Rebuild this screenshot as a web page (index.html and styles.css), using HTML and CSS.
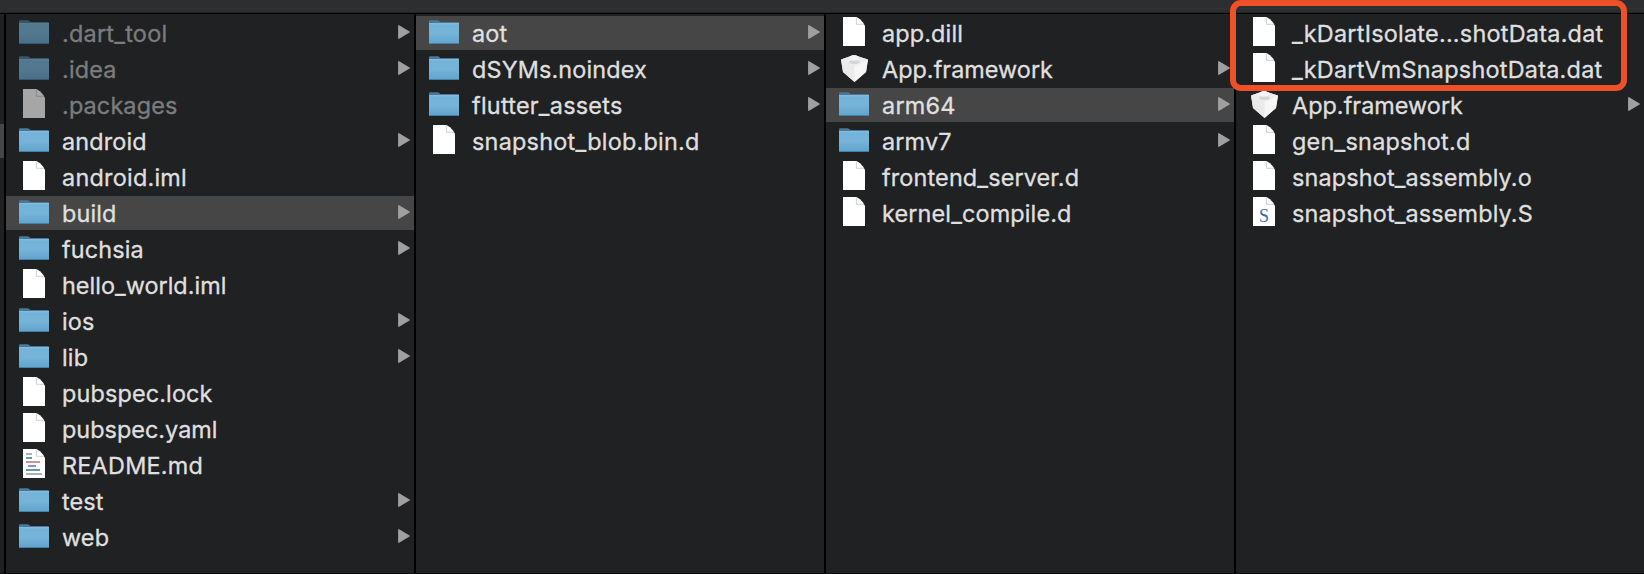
FILE: index.html
```html
<!DOCTYPE html>
<html lang="en">
<head>
<meta charset="utf-8">
<title>Finder</title>
<link rel="stylesheet" href="styles.css">
</head>
<body>
<svg class="defs" aria-hidden="true">
  <defs>
    <linearGradient id="blue" x1="0" y1="0" x2="0" y2="1"><stop offset="0" stop-color="#74b3d8"/><stop offset=".5" stop-color="#76b3d8"/><stop offset="1" stop-color="#60a3cc"/></linearGradient>
    <symbol id="folder" viewBox="0 0 30 24"><path d="M0 1.200Q0 .2 1 .2H8.500Q9.500 .2 10.300 1L11.500 2H29Q30 2 30 3V10H0Z" fill="#4a7895"/><path d="M0 3.300H30V23Q30 24 29 24H1Q0 24 0 23Z" fill="url(#blue)"/><path d="M0 3.700H30" stroke="#8ac6e8" stroke-width=".9"/><path d="M.5 23.500H29.500" stroke="#437fa6"/></symbol>
    <symbol id="file" viewBox="0 0 22 29"><path d="M0 0H13.500L17 2.300L20 5.500L22 9V29H0Z" fill="#fff"/><path d="M13.400 .3V7.300H20.800" fill="none" stroke="#c6c6c6" stroke-width=".8"/></symbol>
    <symbol id="brick" viewBox="0 0 28 28"><path d="M1 5.500L9.500 2.500Q14 -.5 18.500 2.500L28 5.500L26 18L14.500 28L3 18Z" fill="#e8e8e8"/><path d="M1 5.500L14.500 12L28 5.500L18.500 2.500Q14 -.5 9.500 2.500Z" fill="#ededed"/><path d="M1 5.500L14.500 12V28L3 18Z" fill="#ebebeb"/><path d="M14.500 12L28 5.500L26 18L14.500 28Z" fill="#f6f6f6"/><ellipse cx="14.300" cy="8" rx="5.500" ry="2" fill="#d6d6d6"/><ellipse cx="14.300" cy="4" rx="5" ry="2.600" fill="#f4f4f4"/></symbol>
    <symbol id="arrow" viewBox="0 0 12 14"><path d="M.8 .8L11.200 7L.8 13.200Z" fill="#a0a0a0" stroke="#a0a0a0" stroke-width="1.400" stroke-linejoin="round"/></symbol>
  </defs>
</svg>
<div class="browser">
  <div class="toolbar"></div>
  <main class="columns">
    <div class="edge"><div class="edge-selection"></div></div>
    <section class="column">
      <div class="row dim"><svg class="icon folder"><use href="#folder"/></svg><span class="name wide">.dart_tool</span><svg class="arrow"><use href="#arrow"/></svg></div>
      <div class="row dim"><svg class="icon folder"><use href="#folder"/></svg><span class="name">.idea</span><svg class="arrow"><use href="#arrow"/></svg></div>
      <div class="row dim"><svg class="icon file"><use href="#file"/></svg><span class="name">.packages</span></div>
      <div class="row"><svg class="icon folder"><use href="#folder"/></svg><span class="name">android</span><svg class="arrow"><use href="#arrow"/></svg></div>
      <div class="row"><svg class="icon file"><use href="#file"/></svg><span class="name wide">android.iml</span></div>
      <div class="row selected"><svg class="icon folder"><use href="#folder"/></svg><span class="name">build</span><svg class="arrow"><use href="#arrow"/></svg></div>
      <div class="row"><svg class="icon folder"><use href="#folder"/></svg><span class="name">fuchsia</span><svg class="arrow"><use href="#arrow"/></svg></div>
      <div class="row"><svg class="icon file"><use href="#file"/></svg><span class="name tight">hello_world.iml</span></div>
      <div class="row"><svg class="icon folder"><use href="#folder"/></svg><span class="name">ios</span><svg class="arrow"><use href="#arrow"/></svg></div>
      <div class="row"><svg class="icon folder"><use href="#folder"/></svg><span class="name">lib</span><svg class="arrow"><use href="#arrow"/></svg></div>
      <div class="row"><svg class="icon file"><use href="#file"/></svg><span class="name">pubspec.lock</span></div>
      <div class="row"><svg class="icon file"><use href="#file"/></svg><span class="name tight">pubspec.yaml</span></div>
      <div class="row"><svg class="icon file" viewBox="0 0 22 29"><use href="#file" width="22" height="29"/><g stroke-width="1.800"><path d="M3 5H9M3 25H19" stroke="#b0b0b0"/><path d="M3 9H9M3 21H17" stroke="#5f9d9f"/><path d="M3 13H17" stroke="#c18a91"/><path d="M5 17H13" stroke="#917bd0"/></g></svg><span class="name wide">README.md</span></div>
      <div class="row"><svg class="icon folder"><use href="#folder"/></svg><span class="name">test</span><svg class="arrow"><use href="#arrow"/></svg></div>
      <div class="row"><svg class="icon folder"><use href="#folder"/></svg><span class="name">web</span><svg class="arrow"><use href="#arrow"/></svg></div>
    </section>
    <section class="column">
      <div class="row selected"><svg class="icon folder"><use href="#folder"/></svg><span class="name">aot</span><svg class="arrow"><use href="#arrow"/></svg></div>
      <div class="row"><svg class="icon folder"><use href="#folder"/></svg><span class="name">dSYMs.noindex</span><svg class="arrow"><use href="#arrow"/></svg></div>
      <div class="row"><svg class="icon folder"><use href="#folder"/></svg><span class="name wide">flutter_assets</span><svg class="arrow"><use href="#arrow"/></svg></div>
      <div class="row"><svg class="icon file"><use href="#file"/></svg><span class="name wide">snapshot_blob.bin.d</span></div>
    </section>
    <section class="column">
      <div class="row"><svg class="icon file"><use href="#file"/></svg><span class="name">app.dill</span></div>
      <div class="row"><svg class="icon brick"><use href="#brick"/></svg><span class="name tight">App.framework</span><svg class="arrow"><use href="#arrow"/></svg></div>
      <div class="row selected"><svg class="icon folder"><use href="#folder"/></svg><span class="name wide">arm64</span><svg class="arrow"><use href="#arrow"/></svg></div>
      <div class="row"><svg class="icon folder"><use href="#folder"/></svg><span class="name">armv7</span><svg class="arrow"><use href="#arrow"/></svg></div>
      <div class="row"><svg class="icon file"><use href="#file"/></svg><span class="name">frontend_server.d</span></div>
      <div class="row"><svg class="icon file"><use href="#file"/></svg><span class="name">kernel_compile.d</span></div>
    </section>
    <section class="column last">
      <div class="row"><svg class="icon file"><use href="#file"/></svg><span class="name wide">_kDartIsolate...shotData.dat</span></div>
      <div class="row"><svg class="icon file"><use href="#file"/></svg><span class="name wide">_kDartVmSnapshotData.dat</span></div>
      <div class="row"><svg class="icon brick"><use href="#brick"/></svg><span class="name tight">App.framework</span><svg class="arrow"><use href="#arrow"/></svg></div>
      <div class="row"><svg class="icon file"><use href="#file"/></svg><span class="name wide">gen_snapshot.d</span></div>
      <div class="row"><svg class="icon file"><use href="#file"/></svg><span class="name">snapshot_assembly.o</span></div>
      <div class="row"><svg class="icon file" viewBox="0 0 22 29"><use href="#file" width="22" height="29"/><text class="letter" x="6" y="24.500">S</text></svg><span class="name">snapshot_assembly.S</span></div>
    </section>
  </main>
  <div class="highlight"></div>
</div>
</body>
</html>
```
FILE: styles.css
```css
* { box-sizing: border-box; }
body { margin: 0; background: #202123; font-family: Inter, "Liberation Sans", sans-serif; }
.defs { position: absolute; width: 0; height: 0; }
.browser { position: relative; width: 1644px; height: 574px; overflow: hidden; display: flex; flex-direction: column; border-bottom: 1px solid #0b0b0c; }
.toolbar { height: 14px; background: #2d2e30; border-bottom: 1px solid #000; box-shadow: inset 0 -1px #222325; flex: none; }
.columns { flex: 1; display: grid; grid-template-columns: 6px 410px 410px 410px 408px; }
.edge { border-right: 2px solid #000; padding-top: 110px; }
.edge-selection { height: 34px; background: #464646; }
.column { border-right: 2px solid #000; padding-top: 2px; display: flex; flex-direction: column; gap: 2px; min-width: 0; }
.last { border-right: 0; }
.row { height: 34px; flex: none; padding-left: 13px; display: grid; grid-template-columns: 30px 349px 12px; color: #dfdfdf; }
.selected { background: #464646; }
.icon { justify-self: center; display: block; }
.folder { width: 30px; height: 24px; margin-top: 4px; }
.file { width: 22px; height: 29px; margin-top: 1px; }
.brick { width: 28px; height: 28px; margin-top: 2px; }
.name { padding: 1px 0 0 13px; font-size: 23.4px; line-height: 34px; white-space: nowrap; letter-spacing: .15px; -webkit-text-stroke: .35px currentColor; }
.tight { letter-spacing: .03px; }
.wide { letter-spacing: .25px; }
.arrow { width: 12px; height: 14px; margin-top: 9px; }
.dim .icon { opacity: .6; }
.dim .name { color: #7b7c7e; }
.letter { font-family: "Liberation Serif", serif; font-size: 18px; fill: #3d6ab8; }
.highlight { position: absolute; left: 1230px; top: 0; width: 397px; height: 91px; border: 6px solid #ee5128; border-radius: 11px; }
```
